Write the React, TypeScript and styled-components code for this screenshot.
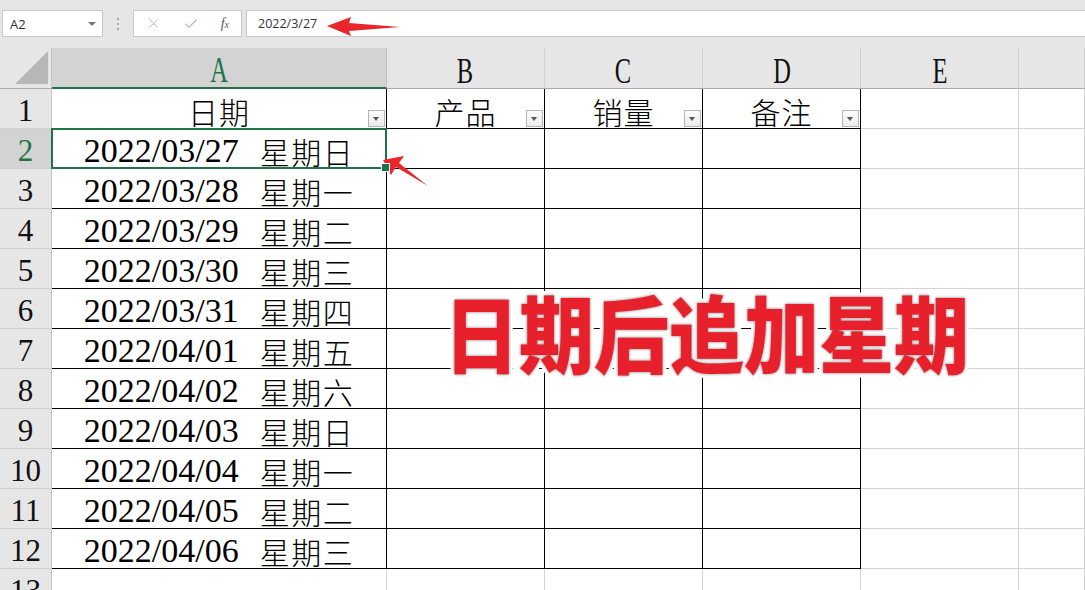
import React from 'react'
import styled, { createGlobalStyle } from 'styled-components'
import { X, Check } from 'lucide-react'

const GlobalStyle = createGlobalStyle`
  html, body {
    margin: 0;
    padding: 0;
    width: 1085px;
    height: 590px;
    overflow: hidden;
    background: #ffffff;
  }
  * { box-sizing: border-box; }
`

const GREEN = '#217346'

const rows = [
  { date: '2022/03/27', week: '星期日' },
  { date: '2022/03/28', week: '星期一' },
  { date: '2022/03/29', week: '星期二' },
  { date: '2022/03/30', week: '星期三' },
  { date: '2022/03/31', week: '星期四' },
  { date: '2022/04/01', week: '星期五' },
  { date: '2022/04/02', week: '星期六' },
  { date: '2022/04/03', week: '星期日' },
  { date: '2022/04/04', week: '星期一' },
  { date: '2022/04/05', week: '星期二' },
  { date: '2022/04/06', week: '星期三' },
]

const columns = ['A', 'B', 'C', 'D', 'E', '']
const headers = ['日期', '产品', '销量', '备注']

const App: React.FunctionComponent = () => {
  return (
    <Page>
      <GlobalStyle />
      <TopBar>
        <NameBox>
          A2
          <Caret />
        </NameBox>
        <Dots>
          <i />
          <i />
          <i />
        </Dots>
        <FuncBox>
          <X size={15} strokeWidth={1.4} color="#b5b5b5" />
          <Check size={16} strokeWidth={1.6} color="#b5b5b5" />
          <Fx>
            f<small>x</small>
          </Fx>
        </FuncBox>
        <FormulaInput>2022/3/27</FormulaInput>
      </TopBar>

      <Sheet>
        <Corner />
        {columns.map((c, i) => (
          <ColHead key={'h' + i} $active={c === 'A'}>
            <Letter>{c}</Letter>
          </ColHead>
        ))}

        <RowHead>
          <RowNum>1</RowNum>
        </RowHead>
        {headers.map((h) => (
          <Cell key={h} $boxed>
            <Title>{h}</Title>
            <FilterBtn />
          </Cell>
        ))}
        <Cell />
        <Cell />

        {rows.map((r, i) => (
          <React.Fragment key={r.date}>
            <RowHead $active={i === 0}>
              <RowNum>{i + 2}</RowNum>
            </RowHead>
            <Cell $boxed $selected={i === 0}>
              <DateText>{r.date}</DateText>
              <WeekText>{r.week}</WeekText>
            </Cell>
            <Cell $boxed />
            <Cell $boxed />
            <Cell $boxed />
            <Cell />
            <Cell />
          </React.Fragment>
        ))}

        <RowHead>
          <RowNum>13</RowNum>
        </RowHead>
        {columns.map((c, i) => (
          <Cell key={'l' + i} />
        ))}
      </Sheet>

      <Banner>日期后追加星期</Banner>

      <ArrowSvg style={{ left: 322, top: 14 }} width="84" height="26" viewBox="0 0 84 26">
        <polygon points="5,12 29,3 27,9 78,13 27,17 29,22" fill="#e8262c" />
      </ArrowSvg>
      <ArrowSvg style={{ left: 378, top: 154 }} width="56" height="38" viewBox="0 0 56 38">
        <polygon points="5,6 26,2 21,9 50,32 18,13 13,21" fill="#e8262c" />
      </ArrowSvg>
    </Page>
  )
}

const Page = styled.div`
  position: relative;
  width: 1085px;
  height: 590px;
  overflow: hidden;
  background: #fff;
`

const TopBar = styled.div`
  display: flex;
  align-items: flex-start;
  height: 48px;
  padding: 10px 0 0 2px;
  background: #e6e6e6;
`

const NameBox = styled.div`
  position: relative;
  display: flex;
  align-items: center;
  width: 101px;
  height: 27px;
  padding-left: 7px;
  background: #fff;
  border: 1px solid #c8c8c8;
  font-family: 'Open Sans', 'Noto Sans', sans-serif;
  font-size: 13px;
  color: #333;
`

const Caret = styled.span`
  position: absolute;
  right: 6px;
  top: 11px;
  width: 0;
  height: 0;
  border-left: 4px solid transparent;
  border-right: 4px solid transparent;
  border-top: 4px solid #777;
`

const Dots = styled.div`
  display: flex;
  flex-direction: column;
  align-items: center;
  justify-content: center;
  gap: 3px;
  width: 30px;
  height: 27px;

  i {
    display: block;
    width: 2px;
    height: 2px;
    background: #a5a5a5;
  }
`

const FuncBox = styled.div`
  display: flex;
  align-items: center;
  justify-content: space-between;
  width: 109px;
  height: 27px;
  padding: 0 12px 0 12px;
  background: #fff;
  border: 1px solid #c8c8c8;
`

const Fx = styled.span`
  font-family: 'Liberation Serif', serif;
  font-style: italic;
  font-size: 14px;
  color: #555;

  small {
    font-size: 10px;
  }
`

const FormulaInput = styled.div`
  display: flex;
  align-items: center;
  flex: 1;
  height: 27px;
  margin-left: 4px;
  padding-left: 11px;
  background: #fff;
  border: 1px solid #c8c8c8;
  border-right: none;
  font-family: 'Open Sans', 'Noto Sans', sans-serif;
  font-size: 12.5px;
  color: #333;
`

const Sheet = styled.div`
  display: grid;
  grid-template-columns: 52px 335px 158px 158px 158px 158px 66px;
  grid-template-rows: 41px repeat(13, 40px);
`

const Corner = styled.div`
  position: relative;
  background: #e6e6e6;
  border-right: 1px solid #c6c6c6;
  border-bottom: 1px solid #ababab;

  &::after {
    content: '';
    position: absolute;
    right: 3px;
    bottom: 4px;
    width: 0;
    height: 0;
    border-left: 33px solid transparent;
    border-bottom: 33px solid #b7b7b7;
  }
`

const ColHead = styled.div<{ $active?: boolean }>`
  display: flex;
  align-items: center;
  justify-content: center;
  padding-top: 5px;
  background: ${(p) => (p.$active ? '#d3d3d3' : '#e6e6e6')};
  border-right: 1px solid ${(p) => (p.$active ? '#c0c0c0' : '#cfcfcf')};
  border-bottom: ${(p) => (p.$active ? `2px solid ${GREEN}` : '1px solid #ababab')};
  color: ${(p) => (p.$active ? GREEN : '#111')};
`

const Letter = styled.span`
  display: inline-block;
  font-family: 'Liberation Serif', serif;
  font-size: 36px;
  line-height: 1;
  transform: scaleX(0.68);
`

const RowHead = styled.div<{ $active?: boolean }>`
  display: flex;
  align-items: center;
  justify-content: center;
  padding-top: 3px;
  background: ${(p) => (p.$active ? '#d3d3d3' : '#e6e6e6')};
  border-right: 1px solid #c6c6c6;
  border-bottom: 1px solid #d0d0d0;
  color: ${(p) => (p.$active ? GREEN : '#111')};
`

const RowNum = styled.span`
  font-family: 'Liberation Serif', serif;
  font-size: 31px;
  line-height: 1;
`

const Cell = styled.div<{ $boxed?: boolean; $selected?: boolean }>`
  position: relative;
  display: flex;
  align-items: center;
  justify-content: center;
  padding-top: 4px;
  border-right: 1px solid ${(p) => (p.$boxed ? '#000' : '#d4d4d4')};
  border-bottom: 1px solid ${(p) => (p.$boxed ? '#000' : '#d4d4d4')};
  color: #000;

  ${(p) =>
    p.$selected &&
    `
    &::after {
      content: '';
      position: absolute;
      left: -1px;
      top: -1px;
      right: -1px;
      bottom: -1px;
      border: 2px solid ${GREEN};
    }
    &::before {
      content: '';
      position: absolute;
      right: -4px;
      bottom: -4px;
      width: 7px;
      height: 7px;
      background: ${GREEN};
      border: 1px solid #fff;
      z-index: 2;
    }
  `}
`

const Title = styled.span`
  font-family: 'Noto Sans CJK SC', sans-serif;
  font-weight: 300;
  font-size: 30px;
  letter-spacing: 1px;
  line-height: 1;
`

const FilterBtn = styled.span`
  position: absolute;
  right: 1px;
  bottom: 1px;
  width: 17px;
  height: 17px;
  border: 1px solid #b5b5b5;
  background: linear-gradient(#fbfbfb, #ececec);

  &::after {
    content: '';
    position: absolute;
    left: 4px;
    top: 6px;
    border-left: 3.5px solid transparent;
    border-right: 3.5px solid transparent;
    border-top: 4px solid #555;
  }
`

const DateText = styled.span`
  font-family: 'Liberation Serif', serif;
  font-size: 34px;
  line-height: 1;
`

const WeekText = styled.span`
  margin-left: 21px;
  font-family: 'Noto Sans CJK SC', sans-serif;
  font-weight: 300;
  font-size: 30px;
  letter-spacing: 1.5px;
  line-height: 1;
`

const Banner = styled.div`
  position: absolute;
  left: 444px;
  top: 290px;
  font-family: 'Noto Sans CJK SC', sans-serif;
  font-weight: 900;
  font-size: 75px;
  line-height: 1.1;
  color: #e8202b;
  -webkit-text-stroke: 8px #ffffff;
  paint-order: stroke fill;
  text-shadow: 0 0 3px #9a9a9a, 0 0 2px #b0b0b0;
  white-space: nowrap;
  transform: scaleY(1.12);
  transform-origin: center;
`

const ArrowSvg = styled.svg`
  position: absolute;
  overflow: visible;
`

export default App
